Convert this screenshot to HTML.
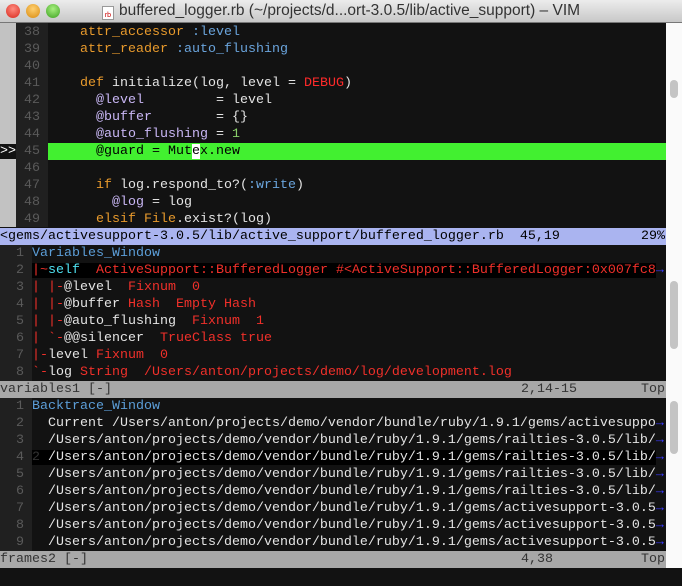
<!DOCTYPE html>
<html><head><meta charset="utf-8"><style>
*{margin:0;padding:0;box-sizing:border-box}
body{width:682px;height:586px;overflow:hidden;background:#121212;font-family:"Liberation Mono",monospace;font-size:13.33px;position:relative}
#tb{position:absolute;left:0;top:0;width:682px;height:23px;background:linear-gradient(#ececec,#c8c8c8);border-bottom:1px solid #777}
.tl{position:absolute;top:4px;width:14px;height:14px;border-radius:50%}
#title{position:absolute;left:0;right:0;top:2px;text-align:center;font-family:"Liberation Sans",sans-serif;font-size:15.5px;color:#333}
.r{position:absolute;left:0;width:666px;height:17px;line-height:17px;white-space:pre;color:#e4e4e4;overflow:hidden}
.n{color:#5a5a5a}
.k{color:#e89a2c}.s{color:#6aa4dc}.i{color:#c9b7f5}.g{color:#8ad06a}.d{color:#ff2a2a}
.red{color:#f0302a}.bl{color:#5c9ed8}.cy{color:#4ee0f0}.ar{color:#3a3aff}
.p{position:absolute;top:0}
#sb{position:absolute;left:666px;top:23px;width:16px;height:545px;background:#fafafa}
.th{position:absolute;left:4px;width:8px;background:#c4c4c4;border-radius:4px}
</style></head><body>
<div id="tb">
<div class="tl" style="left:6px;background:radial-gradient(circle at 50% 35%,#ff8c80,#d8281c)"></div>
<div class="tl" style="left:26px;background:radial-gradient(circle at 50% 35%,#ffd070,#d88a10)"></div>
<div class="tl" style="left:46px;background:radial-gradient(circle at 50% 35%,#a8f080,#3ca020)"></div>
<div id="title"><span style="display:inline-block;width:12px;height:14px;border:1px solid #999;background:#fff;color:#c00;font-size:7px;line-height:18px;vertical-align:-2px;margin-right:5px">rb</span>buffered_logger.rb (~/projects/d...ort-3.0.5/lib/active_support) – VIM</div>
</div>
<div style="position:absolute;left:0;top:23px;width:16px;height:204px;background:#c2c2c2"></div>
<div style="position:absolute;left:16px;top:23px;width:32px;height:204px;background:#202020"></div>
<div style="position:absolute;left:0;top:245px;width:32px;height:136px;background:#202020"></div>
<div style="position:absolute;left:0;top:398px;width:32px;height:153px;background:#202020"></div>

<div class="r" style="top:24px">  <span class="n"> 38 </span>    <span class="k">attr_accessor</span> <span class="s">:level</span></div>
<div class="r" style="top:41px">  <span class="n"> 39 </span>    <span class="k">attr_reader</span> <span class="s">:auto_flushing</span></div>
<div class="r" style="top:58px">  <span class="n"> 40 </span></div>
<div class="r" style="top:75px">  <span class="n"> 41 </span>    <span class="k">def</span> initialize(log, level = <span class="d">DEBUG</span>)</div>
<div class="r" style="top:92px">  <span class="n"> 42 </span>      <span class="i">@level</span>         = level</div>
<div class="r" style="top:109px">  <span class="n"> 43 </span>      <span class="i">@buffer</span>        = {}</div>
<div class="r" style="top:126px">  <span class="n"> 44 </span>      <span class="i">@auto_flushing</span> = <span class="g">1</span></div>
<div class="r" style="top:143px;color:#000"><span style="background:#121212;color:#fff">&gt;&gt;</span><span class="n" style="background:#202020"> 45 </span><span style="background:#42f030;display:inline-block;width:618px">      @guard = Mut<span style="background:#fff">e</span>x.new</span></div>
<div class="r" style="top:160px">  <span class="n"> 46 </span></div>
<div class="r" style="top:177px">  <span class="n"> 47 </span>      <span class="k">if</span> log.respond_to?(<span class="s">:write</span>)</div>
<div class="r" style="top:194px">  <span class="n"> 48 </span>        <span class="i">@log</span> = log</div>
<div class="r" style="top:211px;height:16px">  <span class="n"> 49 </span>      <span class="k">elsif</span> <span class="k">File</span>.exist?(log)</div>
<div class="r" style="top:228px;background:#aab4f0;color:#000">&lt;gems/activesupport-3.0.5/lib/active_support/buffered_logger.rb  45,19<span class="p" style="left:641px">29%</span></div>

<div class="r" style="top:245px"><span class="n">  1 </span><span class="bl">Variables_Window</span></div>
<div class="r red" style="top:262px"><span class="n">  2 </span><span style="background:#000">|~<span class="cy">self</span>  ActiveSupport::BufferedLogger #&lt;ActiveSupport::BufferedLogger:0x007fc8</span><span class="ar">→</span></div>
<div class="r red" style="top:279px"><span class="n">  3 </span>| |-<span style="color:#e4e4e4">@level</span>  Fixnum  0</div>
<div class="r red" style="top:296px"><span class="n">  4 </span>| |-<span style="color:#e4e4e4">@buffer</span> Hash  Empty Hash</div>
<div class="r red" style="top:313px"><span class="n">  5 </span>| |-<span style="color:#e4e4e4">@auto_flushing</span>  Fixnum  1</div>
<div class="r red" style="top:330px"><span class="n">  6 </span>| `-<span style="color:#e4e4e4">@@silencer</span>  TrueClass true</div>
<div class="r red" style="top:347px"><span class="n">  7 </span>|-<span style="color:#e4e4e4">level</span> Fixnum  0</div>
<div class="r red" style="top:364px"><span class="n">  8 </span>`-<span style="color:#e4e4e4">log</span> String  /Users/anton/projects/demo/log/development.log</div>
<div class="r" style="top:381px;background:#a8a8a8;color:#333">variables1 [-]<span class="p" style="left:521px">2,14-15</span><span class="p" style="left:641px">Top</span></div>

<div class="r" style="top:398px"><span class="n">  1 </span><span class="bl">Backtrace_Window</span></div>
<div class="r" style="top:415px"><span class="n">  2 </span>  Current /Users/anton/projects/demo/vendor/bundle/ruby/1.9.1/gems/activesuppo<span class="ar">→</span></div>
<div class="r" style="top:432px"><span class="n">  3 </span>  /Users/anton/projects/demo/vendor/bundle/ruby/1.9.1/gems/railties-3.0.5/lib/<span class="ar">→</span></div>
<div class="r" style="top:449px"><span class="n">  4 </span><span style="background:#000;color:#333">2 </span><span style="background:#000">/Users/anton/projects/demo/vendor/bundle/ruby/1.9.1/gems/railties-3.0.5/lib/</span><span class="ar">→</span></div>
<div class="r" style="top:466px"><span class="n">  5 </span>  /Users/anton/projects/demo/vendor/bundle/ruby/1.9.1/gems/railties-3.0.5/lib/<span class="ar">→</span></div>
<div class="r" style="top:483px"><span class="n">  6 </span>  /Users/anton/projects/demo/vendor/bundle/ruby/1.9.1/gems/railties-3.0.5/lib/<span class="ar">→</span></div>
<div class="r" style="top:500px"><span class="n">  7 </span>  /Users/anton/projects/demo/vendor/bundle/ruby/1.9.1/gems/activesupport-3.0.5<span class="ar">→</span></div>
<div class="r" style="top:517px"><span class="n">  8 </span>  /Users/anton/projects/demo/vendor/bundle/ruby/1.9.1/gems/activesupport-3.0.5<span class="ar">→</span></div>
<div class="r" style="top:534px"><span class="n">  9 </span>  /Users/anton/projects/demo/vendor/bundle/ruby/1.9.1/gems/activesupport-3.0.5<span class="ar">→</span></div>
<div class="r" style="top:551px;background:#a8a8a8;color:#333">frames2 [-]<span class="p" style="left:521px">4,38</span><span class="p" style="left:641px">Top</span></div>

<div id="sb">
<div class="th" style="top:57px;height:18px"></div>
<div class="th" style="top:258px;height:68px"></div>
<div class="th" style="top:378px;height:53px"></div>
</div>
</body></html>
